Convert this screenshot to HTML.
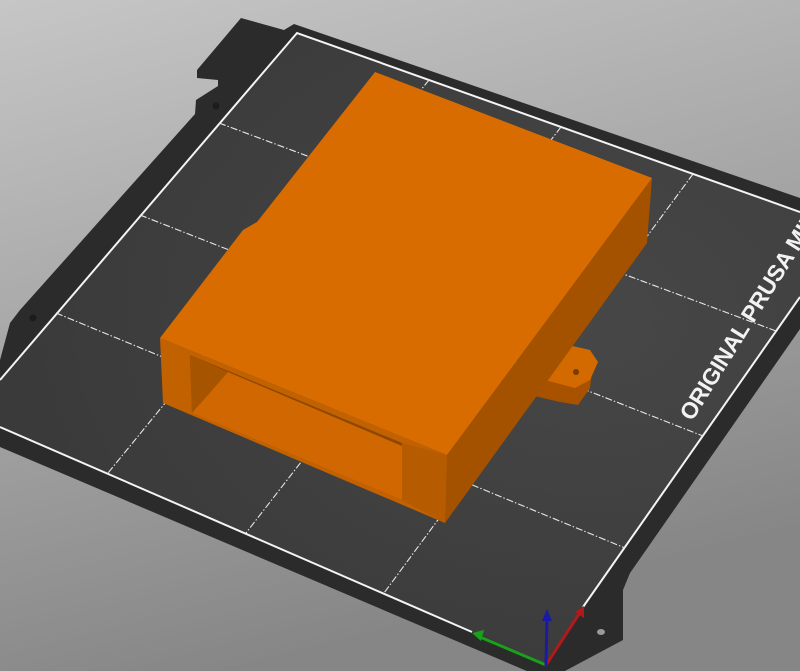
<!DOCTYPE html>
<html><head><meta charset="utf-8"><style>
html,body{margin:0;padding:0;width:800px;height:671px;overflow:hidden;background:#a8a8a8}
svg{display:block}
</style></head><body>
<svg width="800" height="671" viewBox="0 0 800 671" xmlns="http://www.w3.org/2000/svg">
<defs>
<linearGradient id="bg" x1="0" y1="0" x2="0.3" y2="1">
<stop offset="0" stop-color="#c6c6c6"/><stop offset="1" stop-color="#868686"/></linearGradient>
<radialGradient id="bed" cx="0.7" cy="0.45" r="0.7">
<stop offset="0" stop-color="#474747"/><stop offset="1" stop-color="#393939"/></radialGradient>
</defs>
<rect width="800" height="671" fill="url(#bg)"/>
<polygon fill="#2b2b2b" points="197,70 241,18 284,30 294,24 800,198 800,329 630,573 623,590 623,640 548,680 0,447 0,360 10,323 20,310 195,114 196,100 218,86 218,80 197,78"/>
<polygon fill="url(#bed)" points="297,33 847,229 545,663 -30,413"/>
<polyline fill="none" stroke="#f4f4f4" stroke-width="2" points="0,380 297,33 800,212"/>
<polyline fill="none" stroke="#f4f4f4" stroke-width="2" points="583,607 800,297"/>
<polyline fill="none" stroke="#f4f4f4" stroke-width="2" points="0,427 472,632"/>
<g stroke="#e8e8e8" stroke-width="1.1" stroke-dasharray="7 2 1.5 2" fill="none">
<line x1="219" y1="123" x2="776" y2="331"/>
<line x1="140" y1="215" x2="703" y2="436"/>
<line x1="56" y1="313" x2="625" y2="548"/>
<line x1="429" y1="80" x2="108" y2="473"/>
<line x1="561" y1="127" x2="246" y2="533"/>
<line x1="693" y1="174" x2="384" y2="593"/>
</g>
<circle cx="216" cy="106" r="3.5" fill="#1c1c1c"/>
<circle cx="33" cy="318" r="3.5" fill="#1c1c1c"/>
<ellipse cx="601" cy="632" rx="4" ry="3" fill="#9a9a9a"/>
<text x="0" y="0" transform="translate(692,422) rotate(-58)" fill="#f2f2f2" font-family="Liberation Sans, sans-serif" font-weight="bold" font-size="23" letter-spacing="-0.3">ORIGINAL PRUSA MINI</text>
<polygon fill="#a85200" points="525,370 560,358 592,370 590,388 578,405 560,402 530,395"/>
<polygon fill="#d36a00" points="540,332 568,345 590,350 598,362 590,380 575,388 545,380 525,372"/>
<circle cx="576" cy="372" r="3" fill="#7a3a00"/>
<polygon fill="#a55200" points="652,178 647,243 445,523 447,455"/>
<polygon fill="#c26100" points="160,338 447,455 445,523 163,403"/>
<polygon fill="#8e4700" points="190,355 402,443 402,500 192,413"/>
<polygon fill="#a75400" points="190,355 228,372 192,413"/>
<polygon fill="#d06700" points="228,372 402,446 402,500 192,413"/>
<polygon fill="#b65b00" points="402,443 447,455 445,523 402,500"/>
<polygon fill="#d86c00" points="375,72 652,178 447,455 160,338 243,230 257,222"/>
<g stroke-width="3" stroke-linecap="round">
<line x1="546" y1="665" x2="480" y2="637" stroke="#1aa01a"/>
<line x1="546" y1="665" x2="579" y2="614" stroke="#b01a1a"/>
<line x1="546" y1="665" x2="547" y2="618" stroke="#1a1aa8"/>
</g>
<polygon fill="#1aa01a" points="472,633 484,630 481,641"/>
<polygon fill="#b01a1a" points="584,606 584,618 575,612"/>
<polygon fill="#1a1aa8" points="547,609 552,621 542,621"/>
</svg>
</body></html>
